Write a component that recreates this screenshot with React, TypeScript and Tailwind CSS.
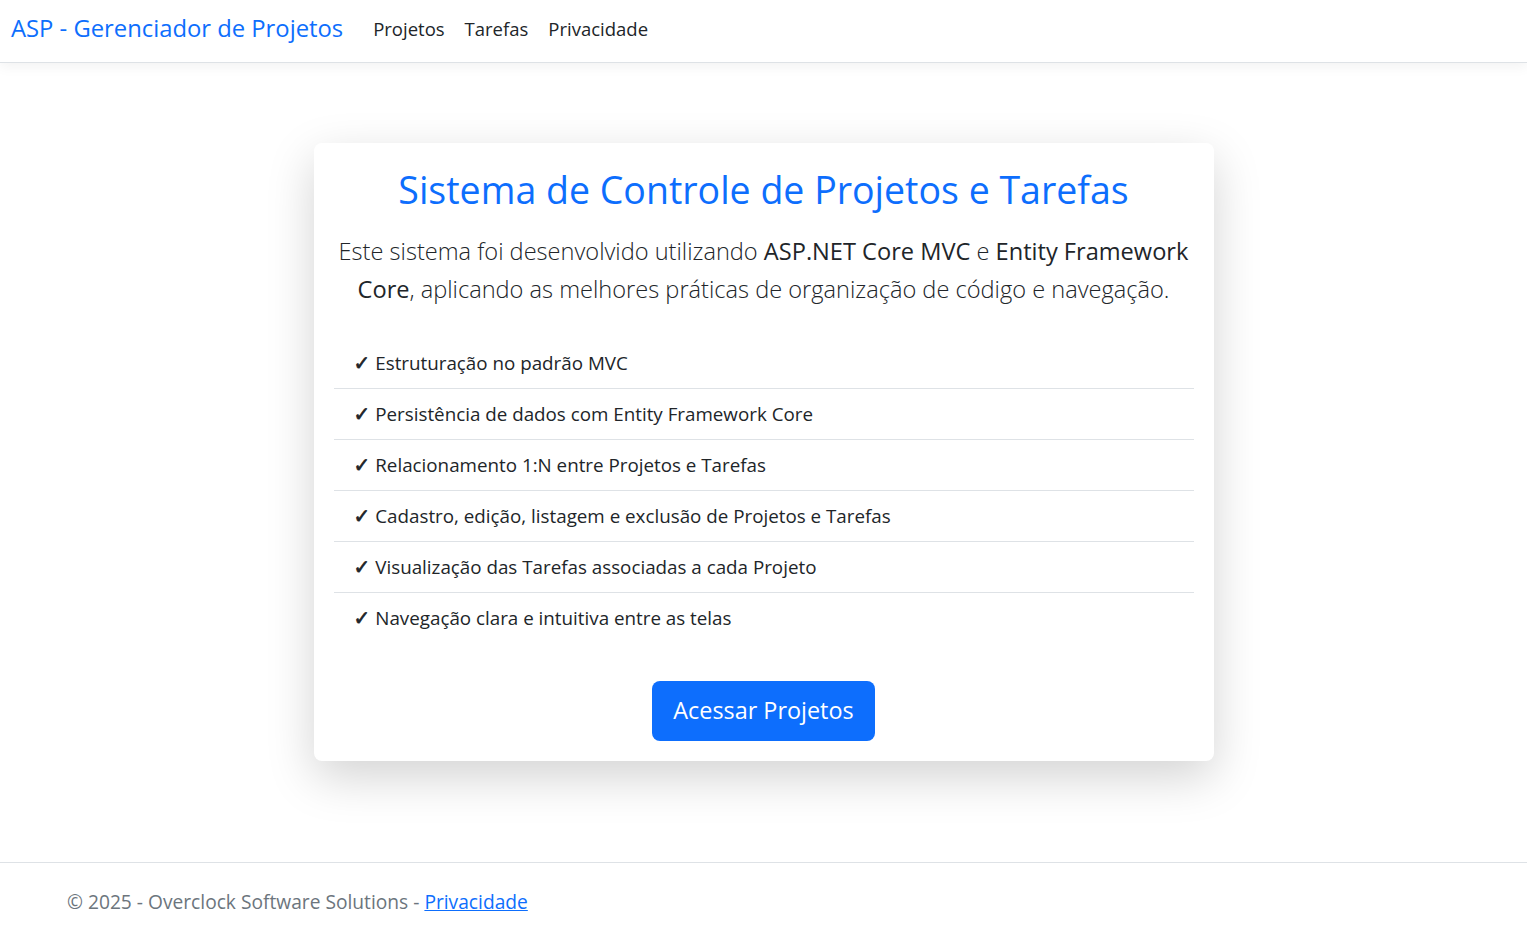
const features = [
  "Estruturação no padrão MVC",
  "Persistência de dados com Entity Framework Core",
  "Relacionamento 1:N entre Projetos e Tarefas",
  "Cadastro, edição, listagem e exclusão de Projetos e Tarefas",
  "Visualização das Tarefas associadas a cada Projeto",
  "Navegação clara e intuitiva entre as telas",
];

export default function App() {
  return (
    <div className="flex min-h-screen flex-col bg-white font-['Open_Sans',sans-serif] text-[#212529]">
      {/* ── Navbar ─────────────────────────────────────────── */}
      <header className="h-[63px] border-b border-[#dee2e6] bg-white shadow-[0_4px_12px_rgba(0,0,0,0.05)]">
        <nav className="flex h-full items-center pb-[4px] pl-[11px]">
          <a href="#" className="text-[23.8px] text-[#0d6efd]">
            ASP - Gerenciador de Projetos
          </a>
          <ul className="ml-[30px] flex items-center gap-[20px] text-[18.5px]">
            <li>Projetos</li>
            <li>Tarefas</li>
            <li>Privacidade</li>
          </ul>
        </nav>
      </header>

      {/* ── Main ───────────────────────────────────────────── */}
      <main className="flex-1 pt-[80px]">
        <div className="mx-auto w-[900px] rounded-lg bg-white p-5 text-center shadow-[0_16px_48px_rgba(0,0,0,0.175)]">
          <h1 className="pt-[1px] text-[37.5px] leading-[52px] text-[#0d6efd]">
            Sistema de Controle de Projetos e Tarefas
          </h1>
          <p className="mt-[16px] text-[23.6px] font-light leading-[38px]">
            Este sistema foi desenvolvido utilizando <strong className="font-normal">ASP.NET Core MVC</strong> e{" "}
            <strong className="font-normal">Entity Framework Core</strong>, aplicando as melhores práticas de
            organização de código e navegação.
          </p>

          <ul className="mt-[30px] text-left text-[18.8px]">
            {features.map((f, i) => (
              <li
                key={f}
                className={
                  i < features.length - 1
                    ? "flex items-center border-b border-[#dee2e6] px-[20px] py-[12px] leading-[26px]"
                    : "flex items-center px-[20px] py-[12px] leading-[26px]"
                }
              >
                <span className="mr-[5px] font-['DejaVu_Sans',sans-serif] text-[20px] font-bold [-webkit-text-stroke:0.7px_currentColor]">
                  ✓
                </span>
                {f}
              </li>
            ))}
          </ul>

          <button
            type="button"
            className="mt-[38px] h-[60px] w-[223px] rounded-lg bg-[#0d6efd] text-[23.4px] text-white"
          >
            Acessar Projetos
          </button>
        </div>
      </main>

      {/* ── Footer ─────────────────────────────────────────── */}
      <footer className="h-[66px] border-t border-[#dee2e6] pl-[67px] pt-[24px] text-[19.2px] leading-[30px] text-[#6c757d]">
        © 2025 - Overclock Software Solutions -{" "}
        <a href="#" className="text-[#0d6efd] underline">
          Privacidade
        </a>
      </footer>
    </div>
  );
}
